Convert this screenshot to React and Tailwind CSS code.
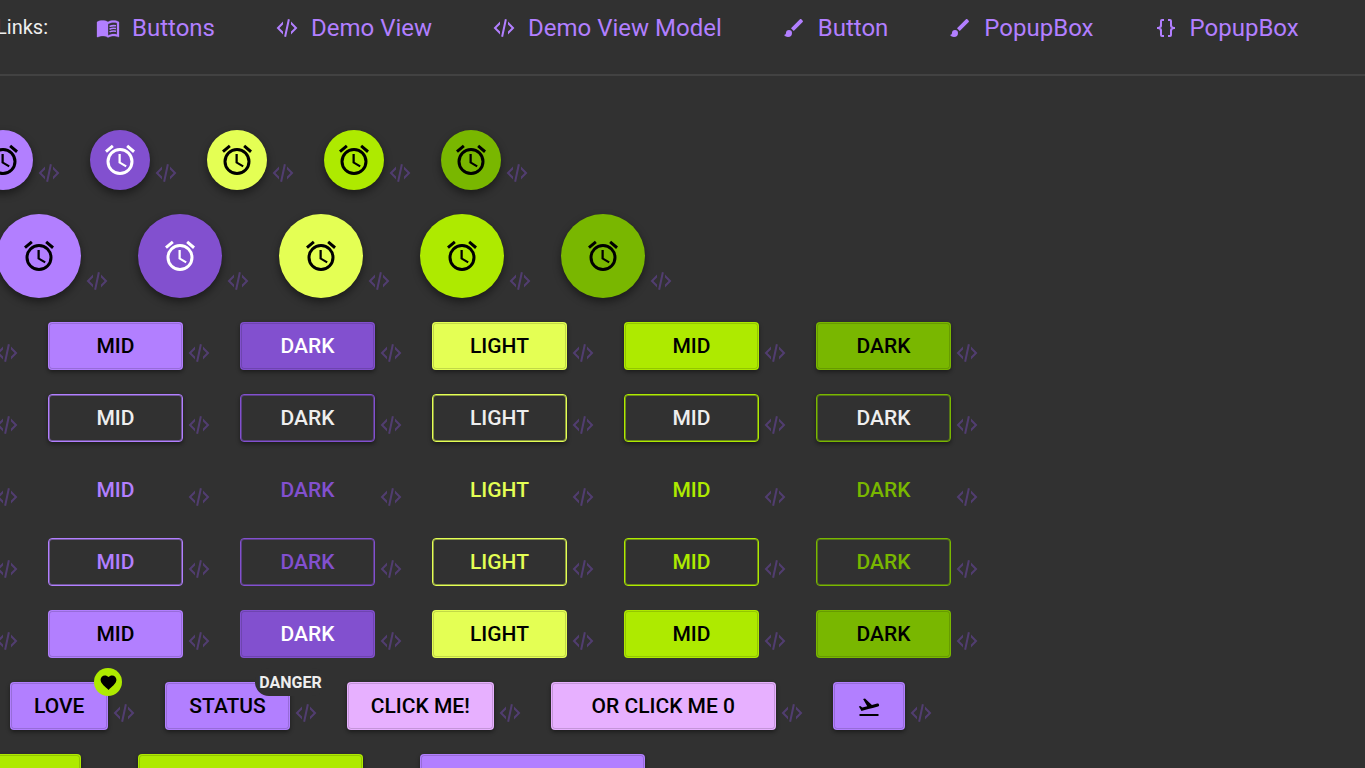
import React, { useState } from 'react';
import clsx from 'clsx';

const paths = {
  xml: 'M12.89,3L14.85,3.4L11.11,21L9.15,20.6L12.89,3M19.59,12L16,8.41V5.58L22.42,12L16,18.41V15.58L19.59,12M1.58,12L8,5.58V8.41L4.41,12L8,15.59V18.41L1.58,12Z',
  brush: 'M20.71,4.63L19.37,3.29C19,2.9 18.35,2.9 17.96,3.29L9,12.25L11.75,15L20.71,6.04C21.1,5.65 21.1,5 20.71,4.63M7,14A3,3 0 0,0 4,17C4,18.31 2.84,19 2,19C2.92,20.22 4.5,21 6,21A4,4 0 0,0 10,17A3,3 0 0,0 7,14Z',
  braces: 'M8,3A2,2 0 0,0 6,5V9A2,2 0 0,1 4,11H3V13H4A2,2 0 0,1 6,15V19A2,2 0 0,0 8,21H10V19H8V14A2,2 0 0,0 6,12A2,2 0 0,0 8,10V5H10V3M16,3A2,2 0 0,1 18,5V9A2,2 0 0,0 20,11H21V13H20A2,2 0 0,0 18,15V19A2,2 0 0,1 16,21H14V19H16V14A2,2 0 0,1 18,12A2,2 0 0,1 16,10V5H14V3H16Z',
  alarm: 'M12,20A7,7 0 0,1 5,13A7,7 0 0,1 12,6A7,7 0 0,1 19,13A7,7 0 0,1 12,20M12,4A9,9 0 0,0 3,13A9,9 0 0,0 12,22A9,9 0 0,0 21,13A9,9 0 0,0 12,4M12.5,8H11V14L15.75,16.85L16.5,15.62L12.5,13.25V8M7.88,3.39L6.6,1.86L2,5.71L3.29,7.24L7.88,3.39M22,5.72L17.4,1.86L16.11,3.39L20.71,7.25L22,5.72Z',
  takeoff: 'M2.5,19H21.5V21H2.5V19M22.07,9.64C21.86,8.84 21.03,8.36 20.23,8.58L14.92,10L8,3.57L6.09,4.08L10.23,11.25L5.26,12.58L3.29,11.04L1.84,11.43L3.66,14.59L4.43,15.92L6.03,15.5L11.34,14.07L15.69,12.91L21,11.5C21.81,11.26 22.28,10.44 22.07,9.64Z',
  heart: 'M12,21.35L10.55,20.03C5.4,15.36 2,12.27 2,8.5C2,5.41 4.42,3 7.5,3C9.24,3 10.91,3.81 12,5.08C13.09,3.81 14.76,3 16.5,3C19.58,3 22,5.41 22,8.5C22,12.27 18.6,15.36 13.45,20.03L12,21.35Z',
};

const Icon = ({ name, className = 'size-6' }) => (
  <svg viewBox="0 0 24 24" fill="currentColor" className={clsx('shrink-0', className)} aria-hidden="true">
    <path d={paths[name]} />
  </svg>
);

const BookIcon = () => (
  <svg viewBox="0 0 24 24" fill="currentColor" stroke="currentColor" className="size-6 shrink-0" aria-hidden="true">
    <path
      strokeWidth="0.3"
      d="M21 5c-1.11-.35-2.33-.5-3.5-.5-1.95 0-4.05.4-5.5 1.5-1.45-1.1-3.55-1.5-5.5-1.5S2.45 4.9 1 6v14.65c0 .25.25.5.5.5.1 0 .15-.05.25-.05C3.1 20.45 5.05 20 6.5 20c1.95 0 4.05.4 5.5 1.5 1.35-.85 3.8-1.5 5.5-1.5 1.65 0 3.35.3 4.75 1.05.1.05.15.05.25.05.25 0 .5-.25.5-.5V6c-.6-.45-1.25-.75-2-1zm0 13.5c-1.1-.35-2.3-.5-3.5-.5-1.7 0-4.15.65-5.5 1.5V8c1.35-.85 3.8-1.5 5.5-1.5 1.2 0 2.4.15 3.5.5v11.5z"
    />
    <path
      fill="none"
      strokeWidth="1.6"
      d="M13.5 10.5C15.2 9.7 17.6 9.4 20 9.8M13.5 13.2C15.2 12.4 17.6 12.1 20 12.5M13.5 15.9C15.2 15.1 17.6 14.8 20 15.2"
    />
  </svg>
);

const links = [
  { label: 'Buttons', icon: 'book' },
  { label: 'Demo View', icon: 'xml' },
  { label: 'Demo View Model', icon: 'xml' },
  { label: 'Button', icon: 'brush' },
  { label: 'PopupBox', icon: 'brush' },
  { label: 'PopupBox', icon: 'braces' },
];

// Purple mid/dark, then the three lime accents
const palette = [
  { label: 'MID', fill: 'bg-[#b27fff] text-black', line: 'border-[#b27fff] inset-shadow-[0_0_0_1px_#b27fff80]', text: 'text-[#b27fff]' },
  { label: 'DARK', fill: 'bg-[#8250cf] text-white', line: 'border-[#8250cf] inset-shadow-[0_0_0_1px_#8250cf80]', text: 'text-[#8250cf]' },
  { label: 'LIGHT', fill: 'bg-[#e4ff54] text-black', line: 'border-[#e4ff54] inset-shadow-[0_0_0_1px_#e4ff5480]', text: 'text-[#e4ff54]' },
  { label: 'MID', fill: 'bg-[#aeea00] text-black', line: 'border-[#aeea00] inset-shadow-[0_0_0_1px_#aeea0080]', text: 'text-[#aeea00]' },
  { label: 'DARK', fill: 'bg-[#79b700] text-black', line: 'border-[#79b700] inset-shadow-[0_0_0_1px_#79b70080]', text: 'text-[#79b700]' },
];

const raised = 'shadow-[0_2px_4px_rgba(0,0,0,0.45)]';

const CodeButton = () => (
  <button type="button" aria-label="Show code" className="mb-[5px] shrink-0 text-[#8250cf] opacity-40 hover:opacity-100">
    <Icon name="xml" />
  </button>
);

const Cell = ({ children }) => (
  <div className="flex shrink-0 items-end gap-1">
    {children}
    <CodeButton />
  </div>
);

const Row = ({ className, children }) => (
  <div className={clsx('flex gap-[29px]', className)}>{children}</div>
);

const FloatingButton = ({ color, size }) => (
  <button
    type="button"
    aria-label="Alarm"
    className={clsx('flex items-center justify-center rounded-full shadow-[0_4px_9px_rgba(0,0,0,0.45)]', size, color.fill)}
  >
    <Icon name="alarm" className="size-9" />
  </button>
);

// Filled buttons carry a darker hairline just inside their edge
const FilledButton = ({ className, children, ...rest }) => (
  <button type="button" className={clsx('relative flex h-12 items-center justify-center rounded-[4px] pt-px text-[21px] font-medium', className)} {...rest}>
    <span className="pointer-events-none absolute inset-px rounded-[3px] border border-black/15" />
    {children}
  </button>
);

const TextButton = ({ color, variant }) => {
  if (variant === 'raised' || variant === 'filled') {
    return (
      <FilledButton className={clsx('w-[135px]', color.fill, variant === 'raised' && raised)}>
        {color.label}
      </FilledButton>
    );
  }
  return (
    <button
      type="button"
      className={clsx(
        'h-12 w-[135px] rounded-[4px] pt-px text-[21px] font-medium',
        variant === 'flat' && color.text,
        variant === 'outlined' && ['border', color.line, color.text],
        variant === 'raised-outlined' && ['border bg-[#313131] text-[#eeeeee]', color.line, raised]
      )}
    >
      {color.label}
    </button>
  );
};

const variants = ['raised', 'raised-outlined', 'flat', 'outlined', 'filled'];

export default function App() {
  const [clicks, setClicks] = useState(0);

  return (
    <div className="h-screen overflow-hidden bg-[#313131] font-['Roboto',sans-serif] text-[#eeeeee]">
      <header className="flex h-[76px] items-start border-b-2 border-[#424242] pt-3">
        <span className="-ml-1 w-[100px] shrink-0 text-[20px] leading-[30px]">Links:</span>
        <nav className="flex gap-[60px]">
          {links.map((link, i) => (
            <a key={i} href="#" className="flex shrink-0 items-center gap-3 text-2xl leading-8 text-[#b27fff]">
              {link.icon === 'book' ? <BookIcon /> : <Icon name={link.icon} />}
              {link.label}
            </a>
          ))}
        </nav>
      </header>

      <main className="flex flex-col gap-6 pt-[54px]">
        <Row className="-ml-[27px]">
          {palette.map((color, i) => (
            <Cell key={i}>
              <FloatingButton color={color} size="size-[60px]" />
            </Cell>
          ))}
        </Row>
        <Row className="-ml-[3px]">
          {palette.map((color, i) => (
            <Cell key={i}>
              <FloatingButton color={color} size="size-[84px]" />
            </Cell>
          ))}
        </Row>

        {variants.map((variant) => (
          <Row key={variant} className="-ml-[5px] items-end">
            <CodeButton />
            {palette.map((color, i) => (
              <Cell key={i}>
                <TextButton color={color} variant={variant} />
              </Cell>
            ))}
          </Row>
        ))}

        <Row className="ml-[10px]">
          <Cell>
            <FilledButton className={clsx('bg-[#b27fff] px-6 text-black', raised)}>
              LOVE
              <span className="absolute -top-3.5 -right-3.5 flex size-7 items-center justify-center rounded-full bg-[#aeea00]">
                <Icon name="heart" className="size-[19px]" />
              </span>
            </FilledButton>
          </Cell>
          <Cell>
            <FilledButton className={clsx('bg-[#b27fff] px-6 text-black', raised)}>
              STATUS
              <span className="absolute -top-3.5 -right-9 rounded-full bg-[#313131] px-1 pt-px text-[16px] leading-[27px] font-bold text-[#eeeeee]">
                DANGER
              </span>
            </FilledButton>
          </Cell>
          <Cell>
            <FilledButton className={clsx('bg-[#e7b0ff] px-6 text-black', raised)}>CLICK ME!</FilledButton>
          </Cell>
          <Cell>
            <FilledButton
              className={clsx('w-[225px] bg-[#e7b0ff] text-black', raised)}
              onClick={() => setClicks(clicks + 1)}
            >
              OR CLICK ME {clicks}
            </FilledButton>
          </Cell>
          <Cell>
            <FilledButton className={clsx('bg-[#b27fff] px-6 text-black', raised)} aria-label="Take off">
              <Icon name="takeoff" />
            </FilledButton>
          </Cell>
        </Row>

        <Row className="-ml-36">
          {['bg-[#aeea00]', 'bg-[#aeea00]', 'bg-[#b27fff]'].map((bg, i) => (
            <Cell key={i}>
              <FilledButton className={clsx('w-[225px]', bg, raised)} aria-label="Progress" />
            </Cell>
          ))}
        </Row>
      </main>
    </div>
  );
}
